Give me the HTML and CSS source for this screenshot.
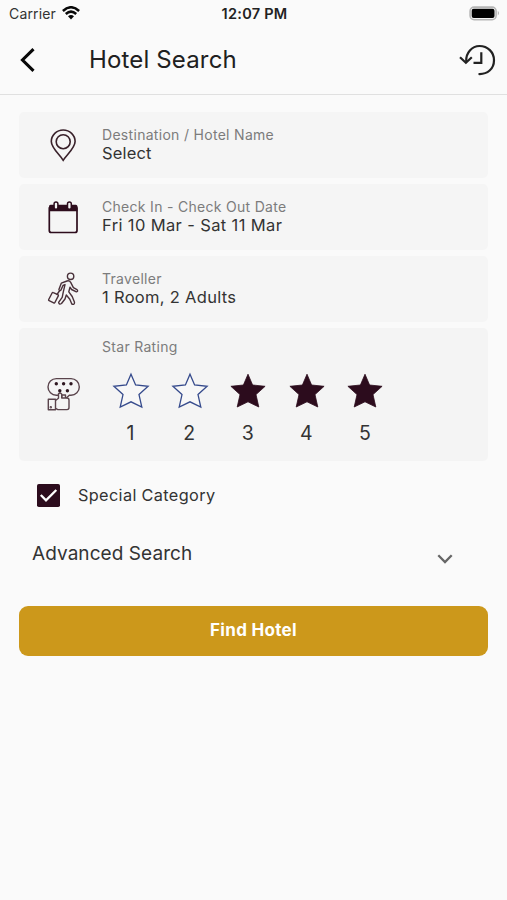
FILE: index.html
```html
<!DOCTYPE html>
<html lang="en">
<head>
<meta charset="utf-8">
<meta name="viewport" content="width=device-width">
<title>Hotel Search</title>
<link rel="stylesheet" href="styles.css">
</head>
<body>
<div class="status">
  <div class="carrier"><span>Carrier</span>
    <svg width="18" height="14" viewBox="0 0 18 14" fill="none" stroke="#080808" stroke-width="2.5"><path d="M.9 5Q9-2.5 17.1 5M3.8 8Q9 3.2 14.2 8"/><path d="M6 10.3Q9 7.5 12 10.3L9 13.4z" fill="#080808" stroke="none"/></svg>
  </div>
  <div class="time">12:07 PM</div>
  <svg class="battery" width="31" height="15" viewBox="0 0 31 15"><rect x="1.1" y="1.1" width="26" height="12.6" rx="4" fill="#f5f5f5" stroke="#b5b5b5" stroke-width="1.6"/><rect x="2.7" y="2.7" width="22.8" height="9.4" rx="2" fill="#000"/><path d="M28.8 4.8q2.2 2.3 0 4.8z" fill="#aaa"/></svg>
</div>
<header class="header">
  <svg width="16" height="24" viewBox="0 0 16 24" fill="none" stroke="#080808" stroke-width="3.1"><path d="M13.5 1.2 2.5 12l11 10.8"/></svg>
  <h1>Hotel Search</h1>
  <svg class="history" width="37" height="32" viewBox="0 0 37 32" fill="none" stroke="#222" stroke-width="2.2"><path d="M7.2 17.2C6.8 8.8 13 2 20.5 2 28.8 2 35 8.3 35 16.2 35 24.8 28.5 30.5 19.5 30"/><path d="M1 13.2 6.9 18.7 12.8 13.2M22.3 8.2V18.8H14.5"/></svg>
</header>
<main class="form">
  <section class="card">
    <svg class="icon" width="36" height="36" viewBox="0 0 36 36" fill="none" stroke="#39212a" stroke-width="1.6"><path d="M18.2 33.3C15 28 6.3 21 6.3 14.5a11.9 11.5 0 0 1 23.8 0C30.1 21 21.5 28 18.2 33.3z"/><circle cx="18.2" cy="14.7" r="7"/></svg>
    <div class="copy"><label>Destination / Hotel Name</label><strong>Select</strong></div>
  </section>
  <section class="card">
    <svg class="icon" width="36" height="36" viewBox="0 0 36 36" fill="none" stroke="#2d0c1c" stroke-width="1.7"><path d="M4.3 9V31.5q0 2 2 2H30q2 0 2-2V9z"/><path d="M4 12.3V7.2q0-1.5 1.5-1.5h25.4q1.5 0 1.5 1.5v5.1z" fill="#2d0c1c" stroke="none"/><rect x="9.1" y="2.9" width="3.8" height="7.4" rx="1.9" fill="#f5f5f5" stroke-width="1.5"/><rect x="22.5" y="2.9" width="3.8" height="7.4" rx="1.9" fill="#f5f5f5" stroke-width="1.5"/></svg>
    <div class="copy"><label>Check In - Check Out Date</label><strong class="dates">Fri 10 Mar - Sat 11 Mar</strong></div>
  </section>
  <section class="card">
    <svg class="icon" width="36" height="36" viewBox="0 0 36 36" fill="none" stroke="#49313a" stroke-width="1.4" stroke-linejoin="round" stroke-linecap="round"><circle cx="25.6" cy="5.3" r="3.2"/><path d="M22 10 16.3 12.2 13.9 18.6Q14.6 20.4 16 18.9L18 14.5 20 13.6 18.2 21.3 17.2 26.4 13.6 31.3Q14.2 34.1 16.5 32.5L20 28 21.3 24 24.8 28.3 26.8 33Q29.6 34.3 29.5 31.3L27.2 25.5 23.8 20.8 25 16.2 26.6 18.5 31.4 20.9Q33.5 20.4 32 18.6L28.4 16.6 25.7 11.4Q24.4 9.3 22 10z"/><path d="M12 23.5l2.4-3.5"/><path d="m8.3 21.6 4.6 2.1q.8.4.4 1.2l-3.4 6.6q-.4.8-1.2.4l-4.6-2.2q-.8-.4-.4-1.2l3.4-6.5q.4-.8 1.2-.4z"/></svg>
    <div class="copy"><label>Traveller</label><strong class="guests">1 Room, 2 Adults</strong></div>
  </section>
  <section class="card rating">
    <svg class="icon" width="36" height="36" viewBox="0 0 36 36" fill="none" stroke="#5a444c" stroke-width="1.4" stroke-linejoin="round"><path d="M13.5 18.2h-2.2a8.3 8.3 0 0 1 0-16.6H26a8.3 8.3 0 0 1 0 16.6h-1.7l-3 2.8"/><path d="M10.5 23.5 13.5 21.2V16.8q1.7-1.9 3.2.4v3.8h5.1q2.2 0 2.2 2v7.6q0 2-2 2H12.9l-2.4-1.2M17 21v-3h3.5v3"/><path d="M3.3 22.2h7.2v10.6H3.3z"/><circle cx="5.8" cy="30.3" r=".5"/><g fill="#2e1720" stroke="none"><circle cx="11.3" cy="6.8" r="1.7"/><circle cx="18.6" cy="6.8" r="1.7"/><circle cx="26" cy="6.8" r="1.7"/><circle cx="14.8" cy="13.8" r="1.7"/><circle cx="22.4" cy="13.8" r="1.7"/></g></svg>
    <div class="copy"><label>Star Rating</label>
      <div class="stars">
        <div class="star"><svg width="38" height="38" viewBox="0 0 38 38"><path d="M19 2.2 23.6 13 36.1 14.3 27 22.6 29.8 35 19 29.8 8.2 35 11 22.6 1.9 14.3 14.4 13z"/></svg><span>1</span></div>
        <div class="star"><svg width="38" height="38" viewBox="0 0 38 38"><path d="M19 2.2 23.6 13 36.1 14.3 27 22.6 29.8 35 19 29.8 8.2 35 11 22.6 1.9 14.3 14.4 13z"/></svg><span>2</span></div>
        <div class="star on"><svg width="38" height="38" viewBox="0 0 38 38"><path d="M19 2.2 23.6 13 36.1 14.3 27 22.6 29.8 35 19 29.8 8.2 35 11 22.6 1.9 14.3 14.4 13z"/></svg><span>3</span></div>
        <div class="star on"><svg width="38" height="38" viewBox="0 0 38 38"><path d="M19 2.2 23.6 13 36.1 14.3 27 22.6 29.8 35 19 29.8 8.2 35 11 22.6 1.9 14.3 14.4 13z"/></svg><span>4</span></div>
        <div class="star on"><svg width="38" height="38" viewBox="0 0 38 38"><path d="M19 2.2 23.6 13 36.1 14.3 27 22.6 29.8 35 19 29.8 8.2 35 11 22.6 1.9 14.3 14.4 13z"/></svg><span>5</span></div>
      </div>
    </div>
  </section>
  <div class="special"><svg width="23" height="23" viewBox="0 0 23 23"><rect width="23" height="23" rx="1.8" fill="#2c0c1d"/><path d="m3.8 11 5.2 5.4L19.3 6" fill="none" stroke="#fff" stroke-width="2.3"/></svg><span>Special Category</span></div>
  <div class="advanced"><span>Advanced Search</span><svg width="16" height="10" viewBox="0 0 16 10" fill="none" stroke="#666" stroke-width="2.3"><path d="m1.3 1.3 6.7 6.7 6.7-6.7"/></svg></div>
  <button class="find">Find Hotel</button>
</main>
</body>
</html>
```
FILE: styles.css
```css
* { box-sizing: border-box; }
body { margin: 0; height: 900px; background: #fafafa; color: #333; font-family: Inter, sans-serif; overflow: hidden; }
svg { display: block; flex: none; }
.status { height: 28px; padding: 0 7px 0 9px; display: grid; grid-template-columns: 1fr auto 1fr; align-items: center; font-size: 14px; line-height: 28px; }
.carrier { display: flex; align-items: center; gap: 6px; letter-spacing: .15px; }
.carrier svg { margin-top: -2px; }
.time { font-weight: 600; font-size: 14.5px; color: #222; letter-spacing: .25px; }
.battery { justify-self: end; margin-top: -1px; }
.header { height: 67px; border-bottom: 1px solid #e0e0e0; padding: 0 11px 3px 20px; display: flex; align-items: center; }
h1 { margin: 1px 0 0 53px; font-size: 24px; line-height: 32px; font-weight: 400; letter-spacing: .15px; color: #202020; }
.history { margin-left: auto; }
.form { padding: 17px 19px 0; display: flex; flex-direction: column; }
.card { height: 66px; margin-bottom: 6px; border-radius: 5px; background: #f5f5f5; padding-left: 26px; display: flex; align-items: center; }
.copy { margin: 0 0 2px 21px; display: flex; flex-direction: column; white-space: nowrap; }
.copy label { font-size: 14px; line-height: 19px; letter-spacing: .3px; color: #7c7c7c; }
.copy strong { font-size: 16.5px; line-height: 19px; font-weight: 400; letter-spacing: .15px; color: #333; }
.copy .dates { letter-spacing: .37px; }
.copy .guests { letter-spacing: .3px; }
.rating { height: 133px; background: #f4f4f4; }
.rating .copy { align-self: flex-start; padding-top: 9px; }
.stars { display: flex; gap: 20.6px; margin: 16px 0 0 10px; }
.star { width: 38px; display: flex; flex-direction: column; align-items: center; }
.star path { fill: #f7f7f7; stroke: #354a8c; stroke-width: 1.3; }
.star.on path { fill: #2c0c1d; stroke: #2c0c1d; stroke-width: .8; }
.star span { margin: 11px 1px 0 0; font-size: 19.5px; line-height: 24px; }
.special { height: 23px; margin: 17px 0 0 18px; display: flex; align-items: center; gap: 18px; font-size: 16.3px; letter-spacing: .35px; }
.special span { margin-top: -1px; }
.advanced { height: 28px; margin: 32px 35px 0 13px; display: flex; justify-content: space-between; align-items: center; font-size: 19px; letter-spacing: .07px; }
.advanced svg { margin-top: 12px; }
.find { height: 50px; margin-top: 39px; padding: 0 0 2px; border: 0; border-radius: 9px; background: #cc981b; color: #fff; font: 700 17px/48px Inter, sans-serif; letter-spacing: .3px; }
```
